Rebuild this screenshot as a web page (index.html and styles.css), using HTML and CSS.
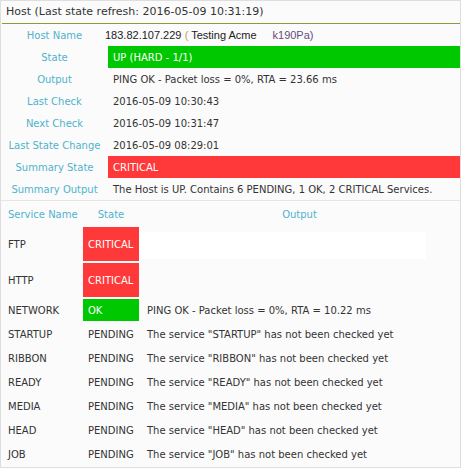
FILE: index.html
```html
<!DOCTYPE html>
<html>
<head>
<meta charset="utf-8">
<link rel="stylesheet" href="styles.css">
</head>
<body>
<div class="panel">
  <div class="panel-head">Host (Last state refresh: 2016-05-09 10:31:19)</div>
  <table class="host">
    <tr><th>Host Name</th><td class="hostname"><span class="hn"><span class="addr">183.82.107.229</span> <span class="paren">(</span><span class="addr"> Testing Acme</span>&nbsp;&nbsp;&nbsp;&nbsp; <span class="alias">k190Pa)</span></span></td></tr>
    <tr><th>State</th><td class="up">UP (HARD - 1/1)</td></tr>
    <tr><th>Output</th><td>PING OK - Packet loss = 0%, RTA = 23.66 ms</td></tr>
    <tr><th>Last Check</th><td>2016-05-09 10:30:43</td></tr>
    <tr><th>Next Check</th><td>2016-05-09 10:31:47</td></tr>
    <tr><th>Last State Change</th><td>2016-05-09 08:29:01</td></tr>
    <tr><th>Summary State</th><td class="crit">CRITICAL</td></tr>
    <tr><th>Summary Output</th><td>The Host is UP. Contains 6 PENDING, 1 OK, 2 CRITICAL Services.</td></tr>
  </table>
  <table class="svc">
    <colgroup><col class="w-name"><col class="w-state"><col></colgroup>
    <tr class="svc-head"><th class="c-name">Service Name</th><th class="c-state">State</th><th class="c-out">Output</th></tr>
    <tr class="tall"><td>FTP</td><td class="crit">CRITICAL</td><td class="out"><div class="outbox"></div></td></tr>
    <tr class="tall"><td>HTTP</td><td class="crit">CRITICAL</td><td class="out"></td></tr>
    <tr><td>NETWORK</td><td class="ok">OK</td><td>PING OK - Packet loss = 0%, RTA = 10.22 ms</td></tr>
    <tr><td>STARTUP</td><td>PENDING</td><td>The service "STARTUP" has not been checked yet</td></tr>
    <tr><td>RIBBON</td><td>PENDING</td><td>The service "RIBBON" has not been checked yet</td></tr>
    <tr><td>READY</td><td>PENDING</td><td>The service "READY" has not been checked yet</td></tr>
    <tr><td>MEDIA</td><td>PENDING</td><td>The service "MEDIA" has not been checked yet</td></tr>
    <tr><td>HEAD</td><td>PENDING</td><td>The service "HEAD" has not been checked yet</td></tr>
    <tr><td>JOB</td><td>PENDING</td><td>The service "JOB" has not been checked yet</td></tr>
  </table>
</div>
</body>
</html>
```
FILE: styles.css
```css
html, body { margin: 0; padding: 0; background: #ffffff; }
body { font-family: "DejaVu Sans", Verdana, sans-serif; font-size: 10px; color: #333333; }
.panel {
  width: 459px;
  height: 466px;
  border: 1px solid #dedede;
  background: #fbfbfb;
  overflow: hidden;
}
.panel-head {
  height: 22px;
  line-height: 22px;
  padding-left: 4px;
  font-size: 11px;
  color: #333;
  border-bottom: 1px solid #8c9a3e;
  margin: 0 0 0 1px;
  white-space: nowrap;
}
.host {
  width: 100%;
  border-collapse: collapse;
  border-bottom: 1px solid #e6e6e6;
}
.host th {
  width: 107px;
  height: 22px;
  padding: 0;
  font-weight: normal;
  color: #4fb3cc;
  text-align: center;
  white-space: nowrap;
}
.host td {
  height: 22px;
  padding: 0 0 0 5px;
  white-space: nowrap;
}
.host td.hostname { padding-left: 0; }
.hn { display: inline-block; margin-left: -3px; }
.addr { font-family: "Liberation Sans", Arial, sans-serif; font-size: 11px; color: #222; }
.paren { font-family: "Liberation Sans", Arial, sans-serif; font-size: 11px; color: #c89a5a; }
.alias { font-family: "Liberation Sans", Arial, sans-serif; font-size: 11px; color: #6a4c78; }
.up { background: #00c800; color: #fff; }
.crit { background: #ff383a; color: #fff; }
.ok { background: #00c800; color: #fff; }
.svc {
  width: 100%;
  table-layout: fixed;
  border-collapse: separate;
  border-spacing: 0 2px;
  margin-top: 0;
}
.w-name { width: 82px; }
.w-state { width: 56px; }
.svc td, .svc th {
  height: 22px;
  padding: 0 0 0 5px;
  text-align: left;
  font-weight: normal;
  white-space: nowrap;
}
.svc-head th { color: #4fb3cc; }
.svc td:first-child, .svc th:first-child { padding-left: 7px; }
.svc .c-state { text-align: center; padding: 0; }
.svc .c-out { text-align: center; padding: 0; }
.svc td:nth-child(3) { padding-left: 8px; }
.tall td { height: 34px; }
.svc td.out { padding: 0; vertical-align: top; }
.outbox { width: 287px; height: 27px; margin-top: 5px; background: #ffffff; }
```
